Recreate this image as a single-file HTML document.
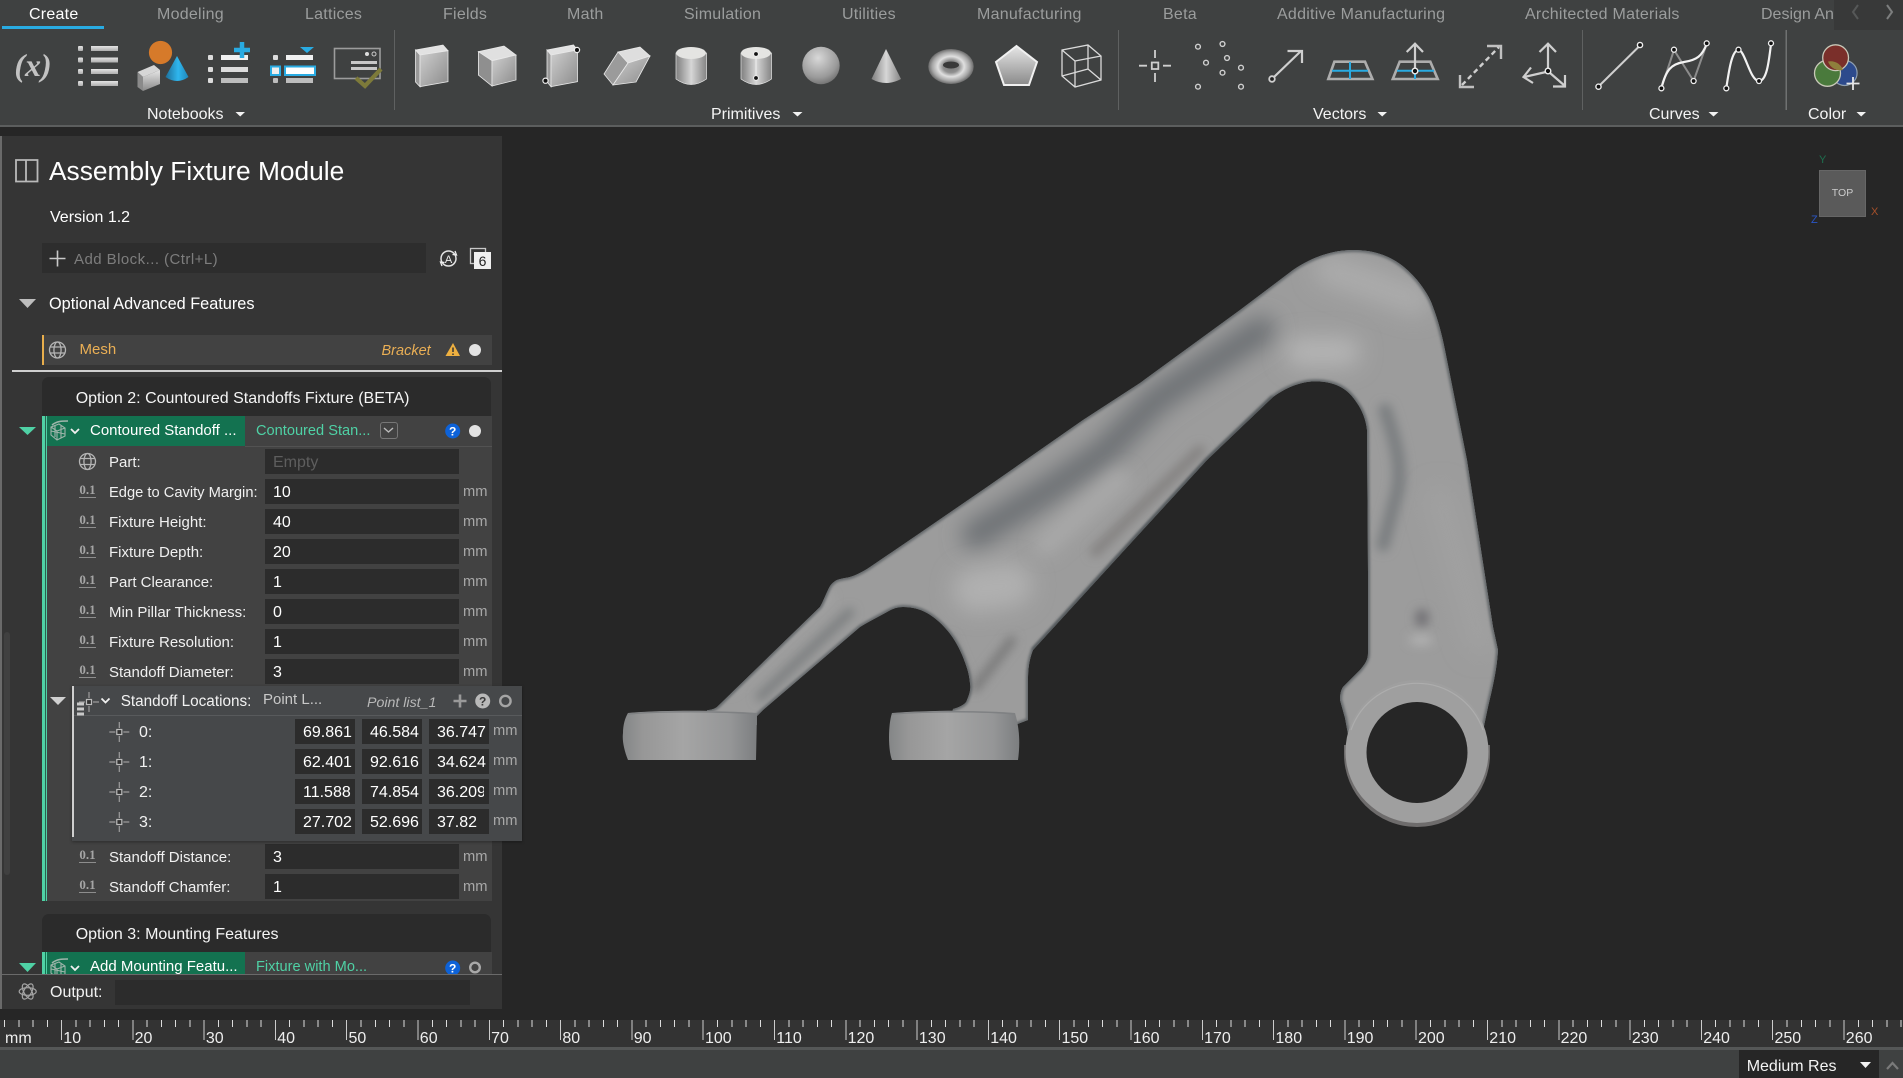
<!DOCTYPE html>
<html><head><meta charset="utf-8"><title>Assembly Fixture Module</title>
<style>
html,body{margin:0;padding:0;background:#262626;}
#r{position:relative;width:1903px;height:1078px;overflow:hidden;background:#262626;font-family:"Liberation Sans",sans-serif;color:#fff;}
.b{position:absolute;}
.t{position:absolute;white-space:nowrap;line-height:20px;font-size:15px;color:#f2f2f2;}
.tab{position:absolute;top:5px;white-space:nowrap;line-height:20px;font-size:16px;letter-spacing:.25px;color:#9b9d9d;}
.g{position:absolute;top:105px;white-space:nowrap;line-height:20px;font-size:16px;color:#f4f4f4;}
.i{position:absolute;left:265px;width:194px;height:25px;background:#2c2c2c;color:#fff;font-size:16px;line-height:27px;text-indent:8px;overflow:hidden;}
.n{position:absolute;width:60px;height:25px;background:#2c2c2c;color:#fff;font-size:16px;line-height:27px;text-indent:8px;overflow:hidden;white-space:nowrap;}
.m{position:absolute;left:463px;font-size:14.7px;line-height:20px;color:#a8a8a8;}
.m2{position:absolute;left:493px;font-size:14.7px;line-height:20px;color:#a8a8a8;}
.z{position:absolute;left:79px;width:17px;font-family:"Liberation Serif",serif;font-weight:bold;font-size:13px;line-height:14px;color:#a5a5a5;text-align:center;border-bottom:1.5px solid #8d8d8d;}
.l{position:absolute;left:109px;font-size:15px;line-height:20px;color:#f0f0f0;white-space:nowrap;}
.rl{position:absolute;top:1029px;font-size:16px;line-height:20px;color:#eee;}
svg{position:absolute;left:0;top:0;overflow:visible;}
</style></head><body><div id="r">

<!-- toolbar -->
<div class="b" style="left:0;top:0;width:1903px;height:125px;background:#3f4141"></div>
<div class="b" style="left:0;top:125px;width:1903px;height:1.5px;background:#5c5e5e"></div>
<div class="tab" style="left:29px;color:#fff">Create</div>
<div class="b" style="left:2px;top:26px;width:102px;height:3px;background:#29abe2"></div>
<div class="tab" style="left:157px">Modeling</div>
<div class="tab" style="left:305px">Lattices</div>
<div class="tab" style="left:443px">Fields</div>
<div class="tab" style="left:567px">Math</div>
<div class="tab" style="left:684px">Simulation</div>
<div class="tab" style="left:842px">Utilities</div>
<div class="tab" style="left:977px">Manufacturing</div>
<div class="tab" style="left:1163px">Beta</div>
<div class="tab" style="left:1277px">Additive Manufacturing</div>
<div class="tab" style="left:1525px">Architected Materials</div>
<div class="tab" style="left:1761px;letter-spacing:0">Design Analysis</div>
<div class="b" style="left:1834px;top:0;width:69px;height:30px;background:#383939"></div>
<div class="g" style="left:147px">Notebooks</div>
<div class="g" style="left:711px">Primitives</div>
<div class="g" style="left:1313px">Vectors</div>
<div class="g" style="left:1649px">Curves</div>
<div class="g" style="left:1808px">Color</div>

<svg width="1903" height="126" viewBox="0 0 1903 126">
<defs>
<linearGradient id="bar" x1="0" y1="0" x2="0" y2="1"><stop offset="0" stop-color="#e4e4e4"/><stop offset="1" stop-color="#aeaeae"/></linearGradient>
<linearGradient id="fr" x1="0" y1="0" x2="1" y2="1"><stop offset="0" stop-color="#cfcfcf"/><stop offset="1" stop-color="#8b8b8b"/></linearGradient>
<linearGradient id="cyl" x1="0" y1="0" x2="1" y2="0"><stop offset="0" stop-color="#7f7f7f"/><stop offset=".5" stop-color="#d6d6d6"/><stop offset="1" stop-color="#858585"/></linearGradient>
<linearGradient id="fv" x1="0" y1="0" x2="0" y2="1"><stop offset="0" stop-color="#e6e6e6"/><stop offset="1" stop-color="#8a8a8a"/></linearGradient>
<linearGradient id="blue" x1="0" y1="0" x2="1" y2="0"><stop offset="0" stop-color="#1d6f9a"/><stop offset=".55" stop-color="#2fb6ee"/><stop offset="1" stop-color="#1f87ba"/></linearGradient>
<radialGradient id="sph" cx=".42" cy=".3" r=".75"><stop offset="0" stop-color="#d8d8d8"/><stop offset=".7" stop-color="#9a9a9a"/><stop offset="1" stop-color="#6c6c6c"/></radialGradient>
<radialGradient id="tor" cx=".5" cy=".5" r=".5"><stop offset="0" stop-color="#777"/><stop offset=".35" stop-color="#8f8f8f"/><stop offset=".58" stop-color="#e0e0e0"/><stop offset=".82" stop-color="#a8a8a8"/><stop offset="1" stop-color="#6b6b6b"/></radialGradient>
</defs>
<text x="33" y="76" text-anchor="middle" font-family="Liberation Serif" font-style="italic" font-weight="bold" font-size="32" fill="#c2c2c2">(x)</text>
<g fill="url(#bar)"><rect x="78" y="46" width="5" height="5" rx="1"/><rect x="91" y="46" width="27" height="5"/><rect x="78" y="57.500" width="5" height="5" rx="1"/><rect x="91" y="57.500" width="27" height="5"/><rect x="78" y="69" width="5" height="5" rx="1"/><rect x="91" y="69" width="27" height="5"/><rect x="78" y="81" width="5" height="5" rx="1"/><rect x="91" y="81" width="27" height="5"/></g>
<ellipse cx="160.500" cy="52.500" rx="11.600" ry="11.600" fill="#d67a2a"/>
<path d="M177 56L188.500 77Q177 85 165.500 77Z" fill="url(#blue)"/>
<path d="M137.500 72L154 65L160 70L143 77Z" fill="#d6d6d6"/><path d="M137.500 72L143 77V91L137.500 87Z" fill="#8a8a8a"/><path d="M143 77L160 70V84L143 91Z" fill="url(#fv)"/>
<g fill="#dcdcdc"><rect x="208" y="55" width="5" height="5" rx="1"/><rect x="221" y="55" width="27" height="5" fill="#f0f0f0"/><rect x="208" y="67" width="5" height="5" rx="1"/><rect x="221" y="67" width="27" height="5"/><rect x="208" y="78" width="5" height="5" rx="1"/><rect x="221" y="78" width="27" height="5" fill="#bdbdbd"/></g>
<path d="M242 42V58M234 50H250" stroke="#29abe2" stroke-width="4.500"/>
<rect x="273" y="55" width="5" height="5" rx="1" fill="#dcdcdc"/><rect x="286" y="55" width="27" height="5" fill="#f0f0f0"/>
<rect x="271" y="66.500" width="9" height="8.500" fill="#eee" stroke="#29abe2" stroke-width="2"/><rect x="285" y="66.500" width="30" height="8.500" fill="#fff" stroke="#29abe2" stroke-width="2"/>
<rect x="273" y="78" width="5" height="5" rx="1" fill="#bdbdbd"/><rect x="286" y="78" width="27" height="5" fill="#bdbdbd"/>
<path d="M300 47H314L307 53Z" fill="#29abe2"/>
<rect x="334.500" y="48.500" width="45.500" height="30" fill="none" stroke="#9c9c9c" stroke-width="1.600"/>
<rect x="351" y="61" width="26" height="3" fill="#c8c8c8"/><rect x="351" y="67" width="26" height="3" fill="#c8c8c8"/>
<circle cx="367" cy="54" r="2" fill="#ddd"/><circle cx="374" cy="54" r="2" fill="none" stroke="#ccc"/>
<path d="M356 78L365 86L381 69" fill="none" stroke="#7d7a3a" stroke-width="4.200"/>
<rect x="394" y="30" width="1" height="80" fill="#5f6161"/><rect x="1118" y="30" width="1" height="80" fill="#5f6161"/><rect x="1582" y="30" width="1" height="80" fill="#5f6161"/><rect x="1785.500" y="30" width="1.500" height="80" fill="#6f7171"/>

<!-- boxes -->
<g stroke="#e8e8e8" stroke-width=".8"><path d="M415.500 50L443 45L448 50.700L420 55Z" fill="#e2e2e2"/><path d="M415.500 50L420 55V86.700L415.500 82Z" fill="#999"/><path d="M420 55L448 50.700V81.700L420 86.700Z" fill="url(#fr)"/>
<path d="M478.400 51.700L504 46L516 55L492 60.700Z" fill="#e0e0e0"/><path d="M478.400 51.700L492 60.700V86L478.400 75Z" fill="#8f8f8f"/><path d="M492 60.700L516 55V80L492 86Z" fill="url(#fr)"/>
<path d="M547 50L573.500 45L577.500 50L551 55Z" fill="#e2e2e2"/><path d="M547 50L551 55V86.700L547 81.700Z" fill="#999"/><path d="M551 55L577.500 50V81.700L551 86.700Z" fill="url(#fr)"/>
<path d="M618 52L640 47L650 56L628 63Z" fill="#dedede"/><path d="M618 52L628 63L613 85L604 74Z" fill="#9b9b9b"/><path d="M628 63L650 56L636 82L613 85Z" fill="url(#fr)"/></g>
<circle cx="577" cy="50" r="2.600" fill="#111" stroke="#eee" stroke-width="1.200"/><circle cx="545.500" cy="80.700" r="2.600" fill="#111" stroke="#eee" stroke-width="1.200"/>
<!-- cylinders -->
<path d="M676 53V79Q691 90 706.500 79V53Z" fill="url(#cyl)" stroke="#e8e8e8" stroke-width=".7"/><ellipse cx="691" cy="53" rx="15" ry="6" fill="#e4e4e2"/>
<path d="M741 53V79Q756 90 771.500 79V53Z" fill="url(#cyl)" stroke="#e8e8e8" stroke-width=".7"/><ellipse cx="756" cy="53" rx="15" ry="6" fill="#e4e4e2"/>
<path d="M756 54V78" stroke="#eee" stroke-width="1"/><circle cx="756" cy="54" r="2.400" fill="#111" stroke="#eee"/><circle cx="756" cy="78" r="2.400" fill="#111" stroke="#eee"/>
<ellipse cx="821" cy="65.500" rx="18.700" ry="18.700" fill="url(#sph)"/>
<path d="M886 49L901 79Q886 87 871.500 79Z" fill="url(#cyl)"/>
<ellipse cx="951" cy="66.500" rx="22.700" ry="17.500" fill="url(#tor)"/><ellipse cx="951" cy="65" rx="8" ry="3.500" fill="#3a3a3a"/>
<path d="M1016.500 46L1037 62L1029 85H1004L996 62Z" fill="url(#fv)" stroke="#f0f0f0" stroke-width="2"/>
<path d="M1062 50L1088 45L1101 56V80L1075 87L1062 76ZM1062 50L1075 61V87M1075 61L1101 56M1088 45V69L1062 76M1088 69L1101 80" fill="none" stroke="#dadada" stroke-width="1.300"/>
<!-- vectors -->
<g fill="none" stroke="#cfcfcf" stroke-width="1.800">
<rect x="1151.800" y="62.500" width="6.500" height="6.500"/><path d="M1139 65.700H1147M1163 65.700H1171M1155 50V58M1155 73V82"/>
<g stroke-width="1.400"><circle cx="1198" cy="46.700" r="2.400"/><circle cx="1222.500" cy="44" r="2.400"/><circle cx="1206" cy="62.700" r="2.400"/><circle cx="1227" cy="58" r="2.400"/><circle cx="1241" cy="67.700" r="2.400"/><circle cx="1222.500" cy="72.700" r="2.400"/><circle cx="1198" cy="86.700" r="2.400"/><circle cx="1241" cy="86.700" r="2.400"/></g>
<path d="M1274 77L1301 51M1287.500 51H1302V63" stroke-width="2.200"/><circle cx="1272" cy="79" r="2.800" fill="#222"/>
<path d="M1334.400 61.700H1365L1372.400 79H1328.300Z" stroke="#adadad" stroke-width="2.600"/>
<path d="M1332 70.700H1368M1350 62V79" stroke="#29abe2" stroke-width="2"/>
<path d="M1399.700 61.700H1430.300L1437.700 79H1392.800Z" stroke="#adadad" stroke-width="2.600"/>
<path d="M1397 70.700H1434M1415 72V79" stroke="#29abe2" stroke-width="2"/>
<path d="M1415 69V44M1406.700 52L1415 43.700L1423 52" stroke-width="2.200"/><circle cx="1415" cy="71" r="2.800" fill="#111" stroke="#eee" stroke-width="1.400"/>
<path d="M1462 85L1499 47" stroke-width="2.400" stroke-dasharray="5 3.500"/><path d="M1487 46H1501V59M1460 75V87H1474" stroke-width="2.400" stroke="#c0c0c0"/>
<path d="M1548 69V44M1539.500 52L1548 43.700L1556 52M1546 72L1524 77M1531 67.500L1523.500 77L1533 83M1550 73L1565 86M1565 75V86.500H1553" stroke-width="2.200"/><circle cx="1548" cy="71" r="2.800" fill="#111" stroke="#eee" stroke-width="1.400"/>
<path d="M1600 85L1638.500 47" stroke-width="2"/><circle cx="1598.500" cy="86.700" r="2.600" fill="#111" stroke-width="1.400" stroke="#eee"/><circle cx="1640" cy="45" r="2.600" fill="#111" stroke-width="1.400" stroke="#eee"/>
<path d="M1661.400 88L1674 50L1693.600 81L1706.700 44" stroke="#8c8c8c" stroke-width="2"/>
<path d="M1661.400 88C1666 70 1671 64 1684 62C1697 60 1702 56 1706.700 44" stroke="#f2f2f2" stroke-width="2.200"/>
<path d="M1726.300 88C1729 70 1732 50 1738.500 50C1745 50 1750 81 1759 81C1767 81 1769 60 1771 44" stroke="#f2f2f2" stroke-width="2.200"/>
</g>
<g fill="#111" stroke="#eee" stroke-width="1.300"><circle cx="1661.400" cy="88.300" r="2.500"/><circle cx="1674" cy="49.700" r="2.500"/><circle cx="1693.600" cy="81" r="2.500"/><circle cx="1706.700" cy="43.300" r="2.500"/><circle cx="1726.300" cy="88.300" r="2.500"/><circle cx="1738.500" cy="49.700" r="2.500"/><circle cx="1759" cy="81" r="2.500"/><circle cx="1771" cy="43.300" r="2.500"/></g>
<circle cx="1844.600" cy="73" r="12.500" fill="#2d4a8c" stroke="#8f9fb0" stroke-width="1.200"/><circle cx="1827.500" cy="73.300" r="13" fill="#4a7a3c" stroke="#c8c8b8" stroke-width="1.300"/><circle cx="1835.600" cy="57.700" r="12.900" fill="#7a2f2a" stroke="#c8c8b8" stroke-width="1.300"/>
<path d="M1828 61.500A13 13 0 0 1 1843 70A12.900 12.900 0 0 1 1828 61.500Z" fill="#8f7f3c"/>
<path d="M1853 77V90M1846.500 83.500H1859.500" stroke="#e6e6e6" stroke-width="1.800"/>
<g fill="#f2f2f2"><path d="M235.500 112H245L240.200 116.500Z"/><path d="M792.500 112H802.500L797.500 116.500Z"/><path d="M1377.500 112H1387L1382.200 116.500Z"/><path d="M1708.500 112H1718.500L1713.500 116.500Z"/><path d="M1856.500 112H1866L1861.200 116.500Z"/></g>
<path d="M1858 5L1853 12L1858 19" fill="none" stroke="#565858" stroke-width="2"/><path d="M1887 5L1892 12L1887 19" fill="none" stroke="#7c7e7e" stroke-width="2"/>
</svg>

<!-- gizmo -->
<div class="b" style="left:1819px;top:170px;width:45px;height:45px;background:#5a5a5a;border:1px solid #666;color:#ccc;font-size:10.500px;line-height:45px;text-align:center;">TOP</div>
<div class="b" style="left:1819px;top:153px;font-size:11px;line-height:14px;color:#1e6f4f">Y</div>
<div class="b" style="left:1871px;top:205px;font-size:11px;line-height:14px;color:#a5502a">X</div>
<div class="b" style="left:1811px;top:213px;font-size:11px;line-height:14px;color:#2a55c5">Z</div>

<!-- bracket -->
<svg width="1903" height="1078" viewBox="0 0 1903 1078">
<defs>
<clipPath id="bc"><path id="bp" d="M1353 250C1368 250 1380 253 1390 258C1402 264 1410 272 1417 280C1425 290 1430 298 1433 307C1438 320 1442 335 1445 350L1467 460L1493 627L1498 650C1497 670 1492 690 1488 707L1480 745L1350 745L1345 718L1340 700C1340 694 1341 690 1343 687L1360 670C1365 664 1368 660 1368 653L1368 573L1367 430C1366 420 1362 410 1357 403C1350 392 1342 386 1330 383C1322 381 1314 381 1307 382C1295 384 1284 389 1273 397L1207 460L1140 533L1033 650C1029 660 1028 670 1028 680L1028 720L1015 725L950 725L953 709C960 707 966 704 967 700C970 693 971 688 970 683C969 672 966 665 963 657C958 645 953 637 947 630C940 622 934 617 927 613C920 609 912 607 903 607C897 607 892 609 887 612C878 617 868 622 860 627L763 710L757 716L757 725L715 725L707 710C711 710 714 709 717 707L820 607C823 602 825 596 828 590C830 585 833 582 837 580C842 578 848 578 853 576C858 574 864 571 870 567L920 533L987 487L1083 420L1140 383L1240 310L1293 270C1310 258 1332 250 1353 250Z"/></clipPath>
<filter id="bl12" filterUnits="userSpaceOnUse" x="560" y="200" width="1000" height="640"><feGaussianBlur stdDeviation="11"/></filter>
<filter id="bl8" filterUnits="userSpaceOnUse" x="560" y="200" width="1000" height="640"><feGaussianBlur stdDeviation="8"/></filter>
<filter id="bl4" filterUnits="userSpaceOnUse" x="560" y="200" width="1000" height="640"><feGaussianBlur stdDeviation="5"/></filter>
<filter id="bl2" filterUnits="userSpaceOnUse" x="560" y="200" width="1000" height="640"><feGaussianBlur stdDeviation="1.300"/></filter>
<linearGradient id="foot" x1="0" y1="0" x2="1" y2="0"><stop offset="0" stop-color="#848687"/><stop offset=".15" stop-color="#979797"/><stop offset=".45" stop-color="#a5a5a5"/><stop offset=".8" stop-color="#959697"/><stop offset="1" stop-color="#7c7e80"/></linearGradient>
</defs>
<g clip-path="url(#bc)">
<rect x="600" y="230" width="920" height="540" fill="#9c9c9c"/>
<g fill="none" stroke-linecap="round">
<path d="M975 535L1053 487L1103 453L1157 399L1262 330" stroke="#6c7073" stroke-width="27" filter="url(#bl12)"/>
<path d="M1095 552L1200 450" stroke="#838180" stroke-width="10" filter="url(#bl4)"/>
<path d="M1385 410C1395 440 1405 470 1395 500L1383 545" stroke="#7a7e80" stroke-width="13" filter="url(#bl4)"/>
<path d="M1300 352L1345 352" stroke="#b4b4b4" stroke-width="30" filter="url(#bl12)"/>
<path d="M1330 270L1415 300" stroke="#ababab" stroke-width="32" filter="url(#bl12)"/>
<path d="M975 590L1010 585" stroke="#b0b0b0" stroke-width="44" filter="url(#bl12)"/>
<path d="M1045 545L1120 480" stroke="#a8a8a8" stroke-width="22" filter="url(#bl8)"/>
<path d="M1440 500L1480 640" stroke="#a0a0a0" stroke-width="30" filter="url(#bl12)"/>
<path d="M975 688L1012 640" stroke="#767676" stroke-width="8" filter="url(#bl4)"/>
<path d="M950 640L966 680" stroke="#838383" stroke-width="8" filter="url(#bl4)"/>
<path d="M760 697L850 612" stroke="#777a7c" stroke-width="8" filter="url(#bl4)"/>
<path d="M730 690L830 598" stroke="#a6a6a6" stroke-width="6" filter="url(#bl4)"/>
</g>
<use href="#bp" fill="none" stroke="#64686b" stroke-width="4" filter="url(#bl2)"/>
<path d="M1273 397L1207 460L1140 533L1033 650" stroke="#555a5d" stroke-width="4" filter="url(#bl2)" fill="none"/>
<ellipse cx="1422" cy="618" rx="7" ry="9" fill="#727175" filter="url(#bl4)"/>
<ellipse cx="1421" cy="640" rx="12" ry="5" fill="#b2b2b2" filter="url(#bl4)"/>
</g>
<path d="M628 713C660 710 720 710 757 713L756 760L628 760C624 750 622 740 623 733C623 725 625 718 628 713Z" fill="url(#foot)"/>
<path d="M892 713C930 710 985 710 1015 713C1020 730 1020 745 1018 760L892 760C888 750 888 725 892 713Z" fill="url(#foot)"/>
<path d="M628 714C660 711 720 711 757 714M892 714C930 711 985 711 1015 714" fill="none" stroke="#7f8183" stroke-width="1.500"/>
<path d="M1344 754A73 73 0 0 0 1490 754L1490 745L1344 745Z" fill="#6e6c6c"/>
<circle cx="1417" cy="751.500" r="71.500" fill="#9f9f9f"/>
<path d="M1351 730A70 70 0 0 1 1483 730" fill="none" stroke="#adadad" stroke-width="1.200"/>
<circle cx="1417" cy="752.500" r="50.500" fill="#262626"/>
</svg>

<!-- panel -->
<div class="b" style="left:0;top:136px;width:502px;height:873px;background:#353535"></div>
<div class="b" style="left:0;top:136px;width:2px;height:873px;background:#6a6a6a"></div>
<div class="b" style="left:4px;top:632px;width:6px;height:243px;background:#404040;border-radius:3px"></div>
<div class="t" style="left:49px;top:156px;font-size:26.300px;line-height:30px;color:#fff">Assembly Fixture Module</div>
<div class="t" style="left:50px;top:208px;font-size:16px;color:#fff">Version 1.2</div>
<div class="b" style="left:42px;top:243px;width:384px;height:30px;background:#2d2d2d"></div>
<div class="t" style="left:74px;top:249.500px;color:#7d7d7d;letter-spacing:.45px">Add Block... (Ctrl+L)</div>
<div class="t" style="left:49px;top:294px;font-size:16.300px;color:#fff">Optional Advanced Features</div>
<div class="b" style="left:42px;top:335px;width:450px;height:30px;background:#424242"></div>
<div class="b" style="left:42px;top:335px;width:2px;height:30px;background:#e8ae4c"></div>
<div class="t" style="left:79.500px;top:340px;color:#eaaf55">Mesh</div>
<div class="t" style="left:381.500px;top:340.500px;color:#eaaf55;font-style:italic;font-size:14.500px">Bracket</div>
<div class="b" style="left:12px;top:370px;width:490px;height:1.500px;background:#cfcfcf"></div>

<div class="b" style="left:42px;top:377px;width:449px;height:40px;background:#2b2b2b;border-radius:7px 7px 0 0"></div>
<div class="t" style="left:75.700px;top:389px;font-size:16px;color:#f5f5f5">Option 2: Countoured Standoffs Fixture (BETA)</div>
<div class="b" style="left:42px;top:416px;width:450px;height:485px;background:#424242"></div>
<div class="b" style="left:42px;top:416px;width:203px;height:30px;background:#137250"></div>
<div class="b" style="left:245px;top:445.500px;width:247px;height:1px;background:#525252"></div>
<div class="b" style="left:42px;top:416px;width:2.500px;height:485px;background:#4fd1a5"></div>
<div class="b" style="left:44.500px;top:416px;width:1px;height:485px;background:#2c5f4f"></div>
<div class="b" style="left:45.500px;top:416px;width:1.500px;height:485px;background:#4fd1a5"></div>
<div class="t" style="left:90px;top:421px;color:#fff">Contoured Standoff ...</div>
<div class="t" style="left:256px;top:421px;color:#4fd1a5;font-size:14.600px">Contoured Stan...</div>
<div class="b" style="left:380px;top:422px;width:16px;height:15px;border:1.500px solid #777;border-radius:3px"></div>

<div class="l" style="top:452.500px">Part:</div><div class="i" style="top:449px;color:#5e5e5e">Empty</div>
<div class="z" style="top:483px">0.1</div><div class="l" style="top:482.500px;font-size:14.700px">Edge to Cavity Margin:</div><div class="i" style="top:479px">10</div><div class="m" style="top:481.500px">mm</div>
<div class="z" style="top:513px">0.1</div><div class="l" style="top:512.500px">Fixture Height:</div><div class="i" style="top:509px">40</div><div class="m" style="top:511.500px">mm</div>
<div class="z" style="top:543px">0.1</div><div class="l" style="top:542.500px">Fixture Depth:</div><div class="i" style="top:539px">20</div><div class="m" style="top:541.500px">mm</div>
<div class="z" style="top:573px">0.1</div><div class="l" style="top:572.500px">Part Clearance:</div><div class="i" style="top:569px">1</div><div class="m" style="top:571.500px">mm</div>
<div class="z" style="top:603px">0.1</div><div class="l" style="top:602.500px">Min Pillar Thickness:</div><div class="i" style="top:599px">0</div><div class="m" style="top:601.500px">mm</div>
<div class="z" style="top:633px">0.1</div><div class="l" style="top:632.500px">Fixture Resolution:</div><div class="i" style="top:629px">1</div><div class="m" style="top:631.500px">mm</div>
<div class="z" style="top:663px">0.1</div><div class="l" style="top:662.500px">Standoff Diameter:</div><div class="i" style="top:659px">3</div><div class="m" style="top:661.500px">mm</div>
<div class="z" style="top:848px">0.1</div><div class="l" style="top:847.500px">Standoff Distance:</div><div class="i" style="top:844px">3</div><div class="m" style="top:846.500px">mm</div>
<div class="z" style="top:878px">0.1</div><div class="l" style="top:877.500px">Standoff Chamfer:</div><div class="i" style="top:874px">1</div><div class="m" style="top:876.500px">mm</div>

<!-- standoff popup -->
<div class="b" style="left:72px;top:686px;width:450px;height:155px;background:#46484a;box-shadow:0 1px 3px rgba(0,0,0,.35)"></div>
<div class="b" style="left:72px;top:686px;width:2px;height:151px;background:#cfcfcf"></div>
<div class="b" style="left:74px;top:715px;width:448px;height:1px;background:#585a5c"></div>
<div class="t" style="left:120.700px;top:692px;color:#f2f2f2;font-size:15.300px">Standoff Locations:</div>
<div class="t" style="left:263px;top:690px;color:#c8c8c8">Point L...</div>
<div class="t" style="left:367px;top:692.500px;color:#b8b8b8;font-style:italic;font-size:14.200px">Point list_1</div>

<div class="t" style="left:139px;top:722.500px;font-size:16px">0:</div>
<div class="n" style="left:295px;top:719px">69.861</div><div class="n" style="left:362px;top:719px">46.584</div><div class="n" style="left:429px;top:719px">36.747</div><div class="m2" style="top:721px">mm</div>
<div class="t" style="left:139px;top:752.500px;font-size:16px">1:</div>
<div class="n" style="left:295px;top:749px">62.401</div><div class="n" style="left:362px;top:749px">92.616</div><div class="n" style="left:429px;top:749px">34.624</div><div class="m2" style="top:751px">mm</div>
<div class="t" style="left:139px;top:782.500px;font-size:16px">2:</div>
<div class="n" style="left:295px;top:779px">11.588</div><div class="n" style="left:362px;top:779px">74.854</div><div class="n" style="left:429px;top:779px;width:55px">36.209</div><div class="b" style="left:484px;top:779px;width:5px;height:25px;background:#2c2c2c"></div><div class="m2" style="top:781px">mm</div>
<div class="t" style="left:139px;top:812.500px;font-size:16px">3:</div>
<div class="n" style="left:295px;top:809px">27.702</div><div class="n" style="left:362px;top:809px">52.696</div><div class="n" style="left:429px;top:809px">37.82</div><div class="m2" style="top:811px">mm</div>

<!-- option 3 -->
<div class="b" style="left:42px;top:914px;width:449px;height:40px;background:#2b2b2b;border-radius:7px 7px 0 0"></div>
<div class="t" style="left:75.700px;top:925px;font-size:16px;color:#f5f5f5">Option 3: Mounting Features</div>
<div class="b" style="left:42px;top:952px;width:450px;height:24px;background:#424242"></div>
<div class="b" style="left:42px;top:952px;width:203px;height:24px;background:#137250"></div>
<div class="b" style="left:42px;top:952px;width:2.500px;height:24px;background:#4fd1a5"></div>
<div class="b" style="left:45.500px;top:952px;width:1.500px;height:24px;background:#4fd1a5"></div>
<div class="t" style="left:90px;top:957px;color:#fff">Add Mounting Featu...</div>
<div class="t" style="left:256px;top:957px;color:#4fd1a5;font-size:14.600px">Fixture with Mo...</div>

<svg width="1903" height="1078" viewBox="0 0 1903 1078">
<defs>
<g id="globe" fill="none" stroke="#b5b5b5" stroke-width="1.300"><circle cx="0" cy="0" r="8"/><ellipse cx="0" cy="0" rx="3.600" ry="8"/><path d="M-7.500-3H7.500M-7.500 3H7.500"/></g>
<g id="cross" fill="none" stroke="#9c9c9c" stroke-width="1.200"><rect x="-2.500" y="-2.500" width="5" height="5" fill="#333" stroke="#bbb"/><path d="M-10 0H-4M4 0H10M0-10V-4M0 4V10"/></g>
<g id="cube" fill="none" stroke="#9fb5ab" stroke-width="1.100"><path d="M-7-4L1-7L7-3V5L-1 9L-7 4ZM-7-4L-1 0V9M-1 0L7-3M-7 0L7 3M-3-6V6M3-5V7"/><path d="M-6-6C-1-10 4-10 10-10" stroke-width="1.500"/></g>
<path id="chev" d="M-4-2L0 2L4-2" fill="none" stroke="#f0f0f0" stroke-width="1.800"/>
<g id="hb"><circle r="7.500" fill="#0d62d8"/><text y="4.500" text-anchor="middle" font-family="Liberation Sans" font-weight="bold" font-size="12" fill="#fff">?</text></g>
</defs>
<!-- panel icon -->
<path d="M16 160H37.500V181.500H16ZM26 160V181.500" fill="none" stroke="#b9b9b9" stroke-width="1.800"/>
<path d="M57.500 250.500V266.500M49.500 258.500H65.500" stroke="#c8c8c8" stroke-width="1.600"/>
<circle cx="448.500" cy="258.500" r="7.500" fill="none" stroke="#e4e4e4" stroke-width="1.500"/>
<path d="M455 251L456.500 255L452.500 254.500M442 266L440.500 262L444.500 262.500" fill="none" stroke="#eee" stroke-width="1.300"/>
<text x="448.500" y="263" text-anchor="middle" font-family="Liberation Sans" font-size="11" fill="#eee">A</text>
<rect x="470.500" y="248.500" width="15" height="15" fill="none" stroke="#c8c8c8" stroke-width="1.300"/>
<rect x="474" y="252" width="17" height="17" fill="#efefef"/>
<text x="482.500" y="266" text-anchor="middle" font-family="Liberation Sans" font-size="14" fill="#222">6</text>
<path d="M19 299H36L27.500 308Z" fill="#bdbdbd"/>
<use href="#globe" x="57.500" y="350"/>
<path d="M453 343L460 356H445.500Z" fill="#eeb040"/><path d="M453 347.500V352M453 353.500V355" stroke="#333" stroke-width="1.500"/>
<circle cx="475" cy="350" r="6" fill="#e2e2e2"/>
<path d="M19 427H36L27.500 435Z" fill="#4fd1a5"/>
<use href="#cube" x="58" y="431"/><use href="#chev" x="75" y="431"/>
<path d="M384 428L388.500 432L393 428" fill="none" stroke="#bbb" stroke-width="1.400"/>
<use href="#hb" x="452.700" y="431"/><circle cx="475" cy="431" r="6" fill="#e2e2e2"/>
<use href="#globe" x="87.500" y="461.500"/>
<!-- popup icons -->
<path d="M50 697H66L58 705Z" fill="#d0d0d0"/>
<use href="#cross" x="89" y="702"/>
<path d="M77 704H84M77 709H84M77 714H84" stroke="#c8c8c8" stroke-width="3"/>
<use href="#chev" x="105.500" y="700.500"/>
<path d="M460 694.500V707.500M453.500 701H466.500" stroke="#999" stroke-width="2.600"/>
<circle cx="482.700" cy="701" r="7.500" fill="#b9b9b9"/><text x="482.700" y="705.500" text-anchor="middle" font-family="Liberation Sans" font-weight="bold" font-size="12" fill="#3a3a3a">?</text>
<circle cx="505.400" cy="701" r="5.200" fill="none" stroke="#a5a5a5" stroke-width="2.400"/>
<use href="#cross" x="119.300" y="732"/><use href="#cross" x="119.300" y="762"/><use href="#cross" x="119.300" y="792"/><use href="#cross" x="119.300" y="822"/>
<!-- option 3 icons -->
<path d="M19 963H36L27.500 972Z" fill="#4fd1a5"/>
<use href="#cube" x="58" y="969"/><use href="#chev" x="75" y="968"/>
<use href="#hb" x="452.700" y="968"/><circle cx="475" cy="967.500" r="4.800" fill="none" stroke="#a8a8a8" stroke-width="2.400"/>
</svg>

<!-- output bar -->
<div class="b" style="left:0;top:973.500px;width:502px;height:35.500px;background:#353535;border-top:1.500px solid #6a6a6a;box-sizing:border-box"></div>
<div class="b" style="left:0;top:975px;width:2px;height:34px;background:#6a6a6a"></div>
<div class="t" style="left:50px;top:982.500px;font-size:16px">Output:</div>
<div class="b" style="left:115px;top:980px;width:355px;height:25px;background:#2c2c2c"></div>
<svg width="60" height="1078" viewBox="0 0 60 1078">
<g fill="none" stroke="#a5a5a5" stroke-width="1.200" transform="translate(27.700 991.500)"><ellipse rx="8.500" ry="3.800"/><ellipse rx="8.500" ry="3.800" transform="rotate(60)"/><ellipse rx="8.500" ry="3.800" transform="rotate(120)"/></g>
</svg>

<!-- ruler -->
<div class="b" style="left:0;top:1020px;width:1903px;height:27px;background:#333"></div>
<div class="b" style="left:0;top:1047px;width:1903px;height:2.500px;background:#555757"></div>
<div class="b" style="left:3.760px;top:1020px;width:1900px;height:7px;background:repeating-linear-gradient(90deg,#ddd 0,#ddd 1px,transparent 1px,transparent 14.26px)"></div>
<div class="b" style="left:60.800px;top:1020px;width:1843px;height:20px;background:repeating-linear-gradient(90deg,#ccc 0,#ccc 1px,transparent 1px,transparent 71.3px)"></div>
<div class="rl" style="left:5px">mm</div><div class="rl" style="left:63.300px">10</div><div class="rl" style="left:134.600px">20</div><div class="rl" style="left:205.900px">30</div><div class="rl" style="left:277.200px">40</div><div class="rl" style="left:348.500px">50</div><div class="rl" style="left:419.800px">60</div><div class="rl" style="left:491.100px">70</div><div class="rl" style="left:562.400px">80</div><div class="rl" style="left:633.700px">90</div><div class="rl" style="left:705px">100</div><div class="rl" style="left:776.300px">110</div><div class="rl" style="left:847.600px">120</div><div class="rl" style="left:918.900px">130</div><div class="rl" style="left:990.200px">140</div><div class="rl" style="left:1061.500px">150</div><div class="rl" style="left:1132.800px">160</div><div class="rl" style="left:1204.100px">170</div><div class="rl" style="left:1275.400px">180</div><div class="rl" style="left:1346.700px">190</div><div class="rl" style="left:1418px">200</div><div class="rl" style="left:1489.300px">210</div><div class="rl" style="left:1560.600px">220</div><div class="rl" style="left:1631.900px">230</div><div class="rl" style="left:1703.200px">240</div><div class="rl" style="left:1774.500px">250</div><div class="rl" style="left:1845.800px">260</div>

<!-- bottom -->
<div class="b" style="left:0;top:1049.500px;width:1903px;height:28.500px;background:#3f4141"></div>
<div class="b" style="left:1739px;top:1050px;width:140px;height:28px;background:#262626"></div>
<div class="t" style="left:1746.700px;top:1057px;font-size:16px;color:#f4f4f4">Medium Res</div>
<svg width="1903" height="1078" viewBox="0 0 1903 1078"><path d="M1860 1062H1871L1865.500 1068Z" fill="#f2f2f2"/><path d="M1887 1069L1892.500 1063L1898 1069" fill="none" stroke="#7a7a7a" stroke-width="2.200"/></svg>
</div></body></html>
